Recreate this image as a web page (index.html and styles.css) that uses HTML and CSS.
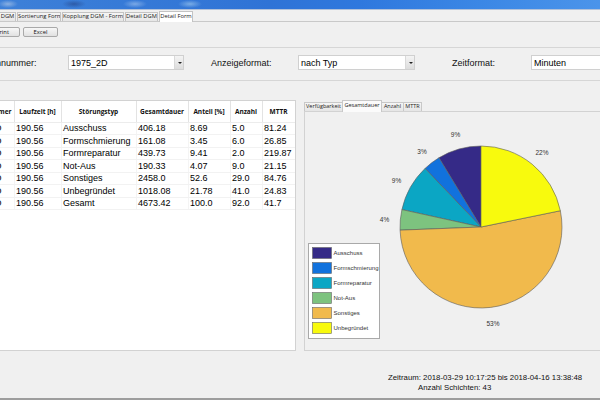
FILE: index.html
```html
<!DOCTYPE html>
<html lang="de">
<head>
<meta charset="utf-8">
<title>Detail Form</title>
<link rel="stylesheet" href="styles.css">
</head>
<body>
<div class="window">
  <div class="titlebar"></div>
  <div class="tabstrip">
    <div class="tab t1">DGM</div>
    <div class="tab t2">Sortierung Form</div>
    <div class="tab t3">Kopplung DGM - Form</div>
    <div class="tab t4">Detail DGM</div>
    <div class="tab t5 active">Detail Form</div>
  </div>
  <div class="toolbar">
    <div class="btn btn-print">Print</div>
    <div class="btn btn-excel">Excel</div>
  </div>
  <div class="formrow">
    <span class="label lab1">Formnummer:</span>
    <div class="select sel1"><span>1975_2D</span><span class="arrow"></span></div>
    <span class="label lab2">Anzeigeformat:</span>
    <div class="select sel2"><span>nach Typ</span><span class="arrow"></span></div>
    <span class="label lab3">Zeitformat:</span>
    <div class="select sel3"><span>Minuten</span><span class="arrow"></span></div>
  </div>
  <div class="main">
    <div class="tablepanel">
      <table class="grid">
        <colgroup>
          <col class="c0"><col class="c1"><col class="c2"><col class="c3"><col class="c4"><col class="c5"><col class="c6">
        </colgroup>
        <thead>
          <tr><th class="first">Formnummer</th><th>Laufzeit [h]</th><th>Störungstyp</th><th>Gesamtdauer</th><th>Anteil [%]</th><th>Anzahl</th><th>MTTR</th></tr>
        </thead>
        <tbody>
          <tr><td class="first">1975_2D</td><td>190.56</td><td>Ausschuss</td><td>406.18</td><td>8.69</td><td>5.0</td><td>81.24</td></tr>
          <tr><td class="first">1975_2D</td><td>190.56</td><td>Formschmierung</td><td>161.08</td><td>3.45</td><td>6.0</td><td>26.85</td></tr>
          <tr><td class="first">1975_2D</td><td>190.56</td><td>Formreparatur</td><td>439.73</td><td>9.41</td><td>2.0</td><td>219.87</td></tr>
          <tr><td class="first">1975_2D</td><td>190.56</td><td>Not-Aus</td><td>190.33</td><td>4.07</td><td>9.0</td><td>21.15</td></tr>
          <tr><td class="first">1975_2D</td><td>190.56</td><td>Sonstiges</td><td>2458.0</td><td>52.6</td><td>29.0</td><td>84.76</td></tr>
          <tr><td class="first">1975_2D</td><td>190.56</td><td>Unbegründet</td><td>1018.08</td><td>21.78</td><td>41.0</td><td>24.83</td></tr>
          <tr><td class="first">1975_2D</td><td>190.56</td><td>Gesamt</td><td>4673.42</td><td>100.0</td><td>92.0</td><td>41.7</td></tr>
        </tbody>
      </table>
    </div>
    <div class="chartpanel">
      <div class="charttabs">
        <div class="ctab ct1">Verfügbarkeit</div>
        <div class="ctab ct2 active">Gesamtdauer</div>
        <div class="ctab ct3">Anzahl</div>
        <div class="ctab ct4">MTTR</div>
      </div>
      <div class="chartbox">
        <svg class="chart" width="295" height="237" viewBox="305 112 295 237" xmlns="http://www.w3.org/2000/svg">
          <g class="slices" stroke="#5a5a5a" stroke-width="0.6" stroke-linejoin="round">
            <path fill="#352a87" d="M481 227 L481 146 A81 81 0 0 0 438.94 157.78 Z"/>
            <path fill="#1172dd" d="M481 227 L438.94 157.78 A81 81 0 0 0 425.04 168.44 Z"/>
            <path fill="#0ba6c4" d="M481 227 L425.04 168.44 A81 81 0 0 0 401.90 209.58 Z"/>
            <path fill="#7dc37f" d="M481 227 L401.90 209.58 A81 81 0 0 0 400.06 230.15 Z"/>
            <path fill="#f1ba4c" d="M481 227 L400.06 230.15 A81 81 0 1 0 560.35 210.73 Z"/>
            <path fill="#f8fa0d" d="M481 227 L560.35 210.73 A81 81 0 0 0 481 146 Z"/>
          </g>
          <g class="pielabels" font-family="Liberation Sans, Arial, sans-serif" font-size="6.5" fill="#333" text-anchor="middle">
            <text x="455.5" y="136.6">9%</text>
            <text x="422" y="153.6">3%</text>
            <text x="396.5" y="182.6">9%</text>
            <text x="384.5" y="221.6">4%</text>
            <text x="542" y="155.1">22%</text>
            <text x="493" y="326">53%</text>
          </g>
          <g class="legend" font-family="Liberation Sans, Arial, sans-serif" font-size="6" fill="#333">
            <rect x="308.5" y="243.5" width="71" height="95" fill="#fff" stroke="#a9a9a9" stroke-width="1"/>
            <rect x="312.5" y="247.5" width="19" height="11" fill="#352a87" stroke="#666" stroke-width="0.6"/>
            <rect x="312.5" y="262.5" width="19" height="11" fill="#1172dd" stroke="#666" stroke-width="0.6"/>
            <rect x="312.5" y="277.5" width="19" height="11" fill="#0ba6c4" stroke="#666" stroke-width="0.6"/>
            <rect x="312.5" y="292.5" width="19" height="11" fill="#7dc37f" stroke="#666" stroke-width="0.6"/>
            <rect x="312.5" y="307.5" width="19" height="11" fill="#f1ba4c" stroke="#666" stroke-width="0.6"/>
            <rect x="312.5" y="322.5" width="19" height="11" fill="#f8fa0d" stroke="#666" stroke-width="0.6"/>
            <text x="333.5" y="255.2">Ausschuss</text>
            <text x="333.5" y="270.2">Formschmierung</text>
            <text x="333.5" y="285.2">Formreparatur</text>
            <text x="333.5" y="300.2">Not-Aus</text>
            <text x="333.5" y="315.2">Sonstiges</text>
            <text x="333.5" y="330.2">Unbegründet</text>
          </g>
        </svg>
      </div>
    </div>
  </div>
  <div class="footer">
    <div class="fline f1">Zeitraum: 2018-03-29 10:17:25 bis 2018-04-16 13:38:48</div>
    <div class="fline f2">Anzahl Schichten: 43</div>
  </div>
  <div class="bottombar"></div>
</div>
</body>
</html>
```

FILE: styles.css
```css
* { box-sizing: border-box; }
html, body { margin: 0; padding: 0; }
body {
  width: 600px;
  height: 400px;
  overflow: hidden;
  background: #f0f0f0;
  font-family: "Liberation Sans", Arial, sans-serif;
  color: #000;
}
.window {
  display: flex;
  flex-direction: column;
  width: 600px;
  height: 400px;
  overflow: hidden;
}

/* title bar */
.titlebar {
  flex: none;
  height: 10px;
  border-bottom: 1px solid #b2c2da;
  background:
    radial-gradient(ellipse 10px 4px at 8px 4px, rgba(200,215,235,0.55), rgba(200,215,235,0) 100%),
    radial-gradient(ellipse 12px 4px at 74px 4px, rgba(30,50,110,0.45), rgba(30,50,110,0) 100%),
    radial-gradient(ellipse 12px 4px at 135px 4px, rgba(190,215,245,0.5), rgba(190,215,245,0) 100%),
    radial-gradient(ellipse 12px 4px at 190px 4px, rgba(190,225,245,0.5), rgba(190,225,245,0) 100%),
    linear-gradient(90deg, #3d80d8 0%, #2f73d6 45%, #2f78de 60%, #3b87e5 80%, #4b94ea 100%);
}

/* window tabs */
.tabstrip {
  flex: none;
  height: 12px;
  display: flex;
  align-items: flex-end;
  border-bottom: 1px solid #c9c9c9;
}
.tab {
  height: 9px;
  margin-left: 1px;
  border: 1px solid #c3c3c3;
  border-bottom: none;
  background: linear-gradient(#f5f5f5, #e6e6e6);
  font-family: "Open Sans", "Liberation Sans", sans-serif;
  font-size: 5.8px;
  line-height: 7px;
  color: #1a1a1a;
  text-align: center;
  white-space: nowrap;
  overflow: hidden;
}
.tab.active {
  height: 11px;
  margin-bottom: -1px;
  background: #fff;
  line-height: 8px;
}
.t1 { width: 17px; margin-left: -1px; }
.t2 { width: 44px; }
.t3 { width: 62px; }
.t4 { width: 33px; }
.t5 { width: 34px; }

/* toolbar */
.toolbar {
  flex: none;
  height: 25px;
  padding-top: 5px;
  display: flex;
  align-items: flex-start;
}
.btn {
  height: 10px;
  border: 1px solid #a9a9a9;
  border-radius: 2px;
  background: linear-gradient(#f7f7f7, #e1e1e1);
  font-family: "Open Sans", "Liberation Sans", sans-serif;
  font-size: 5.8px;
  line-height: 8px;
  text-align: center;
  color: #111;
}
.btn-print { width: 35px; margin-left: -15px; }
.btn-excel { width: 35px; margin-left: 3px; }

/* form row */
.formrow {
  flex: none;
  display: flex;
  align-items: center;
  height: 34px;
  padding: 7px 0 10px;
  border-top: 1px solid #d6d6d6;
  border-bottom: 1px solid #d6d6d6;
  font-size: 9px;
  white-space: nowrap;
}
.label { flex: none; color: #111; }
.lab1 { width: 88px; margin-left: -20px; }
.lab2 { width: 87px; margin-left: 27px; }
.lab3 { width: 79px; margin-left: 37px; }
.select {
  flex: none;
  height: 15px;
  display: flex;
  align-items: center;
  justify-content: space-between;
  background: #fff;
  border: 1px solid #d0d0d0;
  padding-left: 2px;
}
.sel1 { width: 116px; }
.sel2 { width: 117px; }
.sel3 { width: 90px; }
.arrow {
  position: relative;
  width: 9px;
  height: 13px;
  border-left: 1px solid #d9d9d9;
  background: linear-gradient(#f4f4f4, #dcdcdc);
}
.arrow::after {
  content: "";
  position: absolute;
  left: 2.5px;
  top: 5.5px;
  border-left: 2px solid transparent;
  border-right: 2px solid transparent;
  border-top: 2px solid #222;
}

/* main area */
.main {
  flex: none;
  display: flex;
  margin-top: 19px;
  height: 251px;
}
.tablepanel {
  flex: none;
  width: 296px;
  height: 251px;
  background: #fff;
  border: 1px solid #d2d2d2;
  border-left: none;
  overflow: hidden;
}
.grid {
  table-layout: fixed;
  border-collapse: collapse;
  width: 339px;
  margin-left: -44px;
}
.c0 { width: 58px; }
.c1 { width: 47px; }
.c2 { width: 75px; }
.c3 { width: 52px; }
.c4 { width: 42px; }
.c5 { width: 32px; }
.c6 { width: 33px; }
.grid th {
  height: 21px;
  padding: 0;
  font-family: "Open Sans", "Liberation Sans", sans-serif;
  font-weight: 700;
  font-size: 6.5px;
  color: #111;
  text-align: center;
  white-space: nowrap;
  border-right: 1px solid #e3e3e3;
  border-bottom: 1px solid #ececec;
}
.grid th.first { text-align: right; padding-right: 2px; }
.grid td {
  height: 12.5px;
  padding: 0 0 0 1.5px;
  font-size: 9px;
  line-height: 10px;
  white-space: nowrap;
  overflow: hidden;
  border-right: 1px solid #f4f4f4;
  border-bottom: 1px solid #f2f2f2;
}
.grid td.first { text-align: right; padding-right: 12px; }

/* chart panel */
.chartpanel {
  flex: 1;
  margin-left: 8px;
  display: flex;
  flex-direction: column;
}
.charttabs {
  flex: none;
  height: 11px;
  display: flex;
  align-items: flex-end;
}
.ctab {
  height: 9px;
  border: 1px solid #c8c8c8;
  border-bottom: none;
  margin-right: -1px;
  background: linear-gradient(#f5f5f5, #e5e5e5);
  font-family: "Open Sans", "Liberation Sans", sans-serif;
  font-size: 5.5px;
  line-height: 7px;
  color: #222;
  text-align: center;
  white-space: nowrap;
  overflow: hidden;
}
.ctab.active {
  position: relative;
  z-index: 1;
  height: 12px;
  margin-bottom: -1px;
  background: #fbfbfb;
  line-height: 9px;
}
.ct1 { width: 39px; }
.ct2 { width: 40px; }
.ct3 { width: 23px; }
.ct4 { width: 19px; }
.chartbox {
  flex: none;
  height: 240px;
  border: 1px solid #d2d2d2;
  border-right: none;
  overflow: hidden;
}
.chart { display: block; }

/* footer */
.footer {
  flex: none;
  padding-top: 22px;
  font-size: 7.8px;
  line-height: 10px;
  color: #111;
  white-space: nowrap;
}
.f1 { margin-left: 388px; }
.f2 { margin-left: 418px; }
.bottombar {
  flex: none;
  margin-top: auto;
  height: 2px;
  background: #9d9d9d;
}
```
